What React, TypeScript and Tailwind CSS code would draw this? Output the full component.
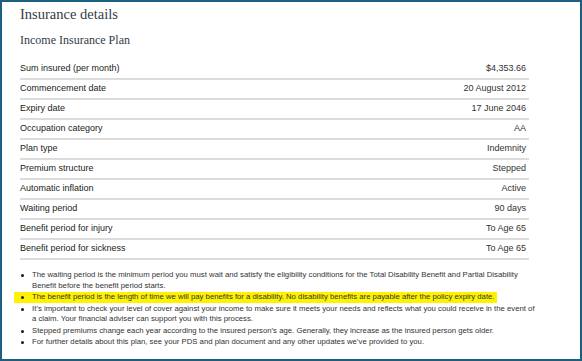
import React from 'react';

const rows: [string, string][] = [
  ['Sum insured (per month)', '$4,353.66'],
  ['Commencement date', '20 August 2012'],
  ['Expiry date', '17 June 2046'],
  ['Occupation category', 'AA'],
  ['Plan type', 'Indemnity'],
  ['Premium structure', 'Stepped'],
  ['Automatic inflation', 'Active'],
  ['Waiting period', '90 days'],
  ['Benefit period for injury', 'To Age 65'],
  ['Benefit period for sickness', 'To Age 65'],
];

const notes = [
  'The waiting period is the minimum period you must wait and satisfy the eligibility conditions for the Total Disability Benefit and Partial Disability Benefit before the benefit period starts.',
  'The benefit period is the length of time we will pay benefits for a disability. No disability benefits are payable after the policy expiry date.',
  'It\u2019s important to check your level of cover against your income to make sure it meets your needs and reflects what you could receive in the event of a claim. Your financial adviser can support you with this process.',
  'Stepped premiums change each year according to the insured person\u2019s age. Generally, they increase as the insured person gets older.',
  'For further details about this plan, see your PDS and plan document and any other updates we\u2019ve provided to you.',
];

export default function App() {
  return (
    <div className="w-[582px] h-[361px] border-2 border-[#1d5f82] bg-white pl-[18px] pt-[4px] overflow-hidden">
      {/* Headings */}
      <h1 className="font-['Liberation_Serif',serif] text-[14.5px] leading-[16px] text-[#333b46]">
        Insurance details
      </h1>
      <h2 className="mt-[10px] font-['Liberation_Serif',serif] text-[12px] leading-[16px] text-[#333b46]">
        Income Insurance Plan
      </h2>

      {/* Details table */}
      <div className="mt-[12px] w-[509px] font-['Liberation_Sans',Arial,sans-serif] text-[9px] text-[#222]">
        {rows.map(([label, value]) => (
          <div
            key={label}
            className="h-[20px] flex items-center justify-between border-b-2 border-[#dcdcdc] pr-[3px]"
          >
            <span>{label}</span>
            <span className="text-[#333]">{value}</span>
          </div>
        ))}
      </div>

      {/* Notes */}
      <ul className="mt-[10px] w-[518px] flex flex-col gap-[1px] font-['Liberation_Sans',Arial,sans-serif] text-[7.75px] leading-[10.5px] text-[#333]">
        {notes.map((note, i) => (
          <li
            key={i}
            className={
              i === 1
                ? 'flex w-fit -ml-[6px] pl-[6px] pr-[2px] bg-[#fff200]'
                : 'flex'
            }
          >
            <span className="mt-[4px] ml-[1px] w-[3px] h-[3px] shrink-0 rounded-full bg-[#1a1a1a]" />
            <span className="ml-[8px]">{note}</span>
          </li>
        ))}
      </ul>
    </div>
  );
}
